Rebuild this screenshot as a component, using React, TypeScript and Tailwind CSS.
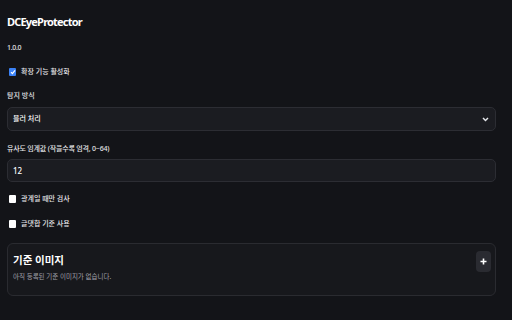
const font = { fontFamily: '"Noto Sans", "Noto Sans CJK KR", sans-serif' };

const Check = ({ checked, label }: { checked?: boolean; label: string }) => (
    <div className="flex items-center h-[8px] pl-[2px]">
        {checked ? (
            <span className="w-[7px] h-[8px] rounded-[1px] bg-[#3b82f6] flex items-center justify-center">
                <svg width="6" height="6" viewBox="0 0 6 6">
                    <path d="M1 3.2 L2.4 4.6 L5 1.4" stroke="#fff" strokeWidth="1.2" fill="none" />
                </svg>
            </span>
        ) : (
            <span className="w-[7px] h-[8px] rounded-[1px] bg-white" />
        )}
        <span className="ml-[5px] text-[7px] leading-[8px] font-medium text-[#e4e4e7]">{label}</span>
    </div>
);

export default function App() {
    return (
        <div className="min-h-screen w-full bg-[#131418] px-[7px] pt-[14px] pr-[16px] text-[#e5e7eb]" style={font}>
            <h1 className="text-[11px] font-bold leading-[16px] tracking-[-0.8px] text-white">DCEyeProtector</h1>
            <p className="mt-[14px] text-[7px] leading-[8px] font-medium tracking-[-0.3px] text-[#e4e4e7]">1.0.0</p>

            <div className="mt-[16px]">
                <Check checked label="확장 기능 활성화" />
            </div>

            <p className="mt-[16px] text-[7px] leading-[8px] font-medium text-[#e4e4e7]">탐지 방식</p>
            <div className="mt-[7px] h-[24px] rounded-[5px] border border-[#2c2d33] bg-[#1b1c21] flex items-center justify-between pl-[5px] pr-[6px]">
                <span className="text-[7px] font-medium text-white">블러 처리</span>
                <svg width="7" height="5" viewBox="0 0 7 5">
                    <path d="M1 1 L3.5 3.6 L6 1" stroke="#e5e7eb" strokeWidth="1.4" fill="none" />
                </svg>
            </div>

            <p className="mt-[14px] text-[7px] leading-[8px] font-medium tracking-[-0.2px] text-[#e4e4e7]">유사도 임계값 (작을수록 엄격, 0~64)</p>
            <div className="mt-[6px] h-[23px] rounded-[5px] border border-[#2c2d33] bg-[#1b1c21] flex items-center px-[5px]">
                <span className="text-[8px] font-medium text-white">12</span>
            </div>

            <div className="mt-[13px]">
                <Check label="광계일 때만 검사" />
            </div>
            <div className="mt-[17px]">
                <Check label="글댓합 기준 사용" />
            </div>

            <div className="mt-[15px] h-[53px] rounded-[6px] border border-[#2a2b30] bg-[#17181c] pl-[5px] pr-[4px]">
                <div className="flex items-start justify-between pt-[7px]">
                    <h2 className="mt-[4px] text-[10.5px] font-bold leading-[11px] text-white">기준 이미지</h2>
                    <button className="w-[15px] h-[21px] rounded-[4px] bg-[#2a2b31] flex items-center justify-center">
                        <svg width="7" height="7" viewBox="0 0 7 7">
                            <path d="M3.5 0.5 V6.5 M0.5 3.5 H6.5" stroke="#fff" strokeWidth="1.6" />
                        </svg>
                    </button>
                </div>
                <p className="mt-[1px] text-[6.5px] leading-[8px] text-[#a1a1aa]">아직 등록된 기준 이미지가 없습니다.</p>
            </div>
        </div>
    );
}
